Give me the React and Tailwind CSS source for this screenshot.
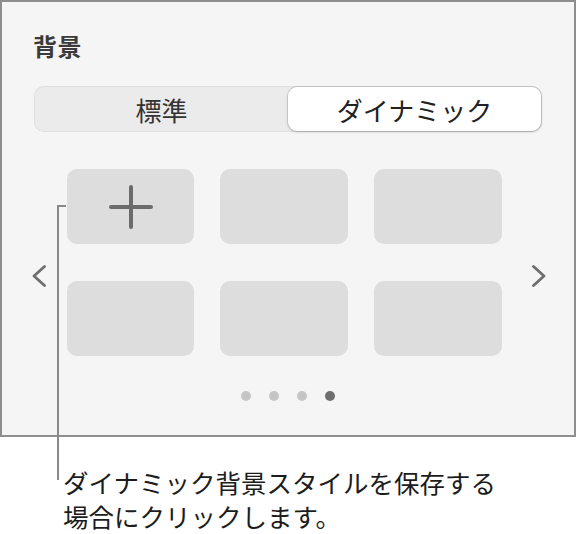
import React from 'react';

const font = { fontFamily: '"Noto Sans CJK JP", "Noto Sans", sans-serif' };

const ChevronLeft = () => (
  <svg width="14" height="22" viewBox="0 0 14 22" fill="none">
    <path d="M12.5 1.5 L2 11 L12.5 20.5" stroke="#6e6e6e" strokeWidth="2.8" strokeLinecap="round" strokeLinejoin="round" />
  </svg>
);

const ChevronRight = () => (
  <svg width="14" height="22" viewBox="0 0 14 22" fill="none">
    <path d="M1.5 1.5 L12 11 L1.5 20.5" stroke="#6e6e6e" strokeWidth="2.8" strokeLinecap="round" strokeLinejoin="round" />
  </svg>
);

const Plus = () => (
  <svg width="44" height="44" viewBox="0 0 44 44" fill="none">
    <path d="M22 2 V42 M2 22 H42" stroke="#6b6b6b" strokeWidth="4" strokeLinecap="round" />
  </svg>
);

const App = () => {
  const cards = [0, 1, 2, 3, 4, 5];
  const dots = [false, false, false, true];

  return (
    <div className="relative w-[577px] h-[534px] bg-white" style={font}>
      {/* Panel */}
      <div className="w-[576px] h-[437px] border-2 border-[#8e8e8e] bg-[#f5f5f5] flex flex-col">
        <h2 className="mt-[30px] ml-[31px] text-[24px] leading-[28px] font-bold text-[#3b3b3b] tracking-[0.02em]">
          背景
        </h2>

        {/* Segmented control */}
        <div className="mt-[26px] ml-[32px] w-[508px] h-[46px] rounded-[10px] bg-[#ebebeb] p-px flex shadow-[inset_0_0_0_1px_rgba(0,0,0,0.05)]">
          <button className="w-[253px] h-full flex items-center justify-center text-[26px] text-[#333333]">
            標準
          </button>
          <button className="w-[253px] h-full rounded-[9px] bg-white flex items-center justify-center text-[26px] text-[#222222] shadow-[0_0_0_1px_rgba(0,0,0,0.1),0_1px_3px_rgba(0,0,0,0.18)]">
            ダイナミック
          </button>
        </div>

        {/* Presets */}
        <div className="mt-[37px] pl-[30px] flex items-start">
          <div className="mt-[96px] w-[14px]">
            <ChevronLeft />
          </div>
          <div className="ml-[21px] grid grid-cols-[127px_128px_128px] gap-x-[26px] gap-y-[37px]">
            {cards.map((i) => (
              <div key={i} className="h-[75px] rounded-[10px] bg-[#dddddd] flex items-center justify-center">
                {i === 0 && <Plus />}
              </div>
            ))}
          </div>
          <div className="mt-[96px] ml-[30px] w-[14px]">
            <ChevronRight />
          </div>
        </div>

        {/* Page dots */}
        <div className="mt-[35px] flex justify-center gap-[18px]">
          {dots.map((on, i) => (
            <span key={i} className={`w-[10px] h-[10px] rounded-full ${on ? 'bg-[#6e6e6e]' : 'bg-[#c6c6c6]'}`} />
          ))}
        </div>
      </div>

      {/* Callout line */}
      <div className="absolute left-[57px] top-[205px] w-[9px] h-[2px] bg-[#8a8a8a]" />
      <div className="absolute left-[57px] top-[205px] w-[2px] h-[275px] bg-[#8a8a8a]" />

      {/* Caption */}
      <p className="mt-[28px] pl-[63px] text-[25.5px] leading-[34px] text-[#1c1c1c]">
        ダイナミック背景スタイルを保存する
        <br />
        場合にクリックします。
      </p>
    </div>
  );
};

export default App;
